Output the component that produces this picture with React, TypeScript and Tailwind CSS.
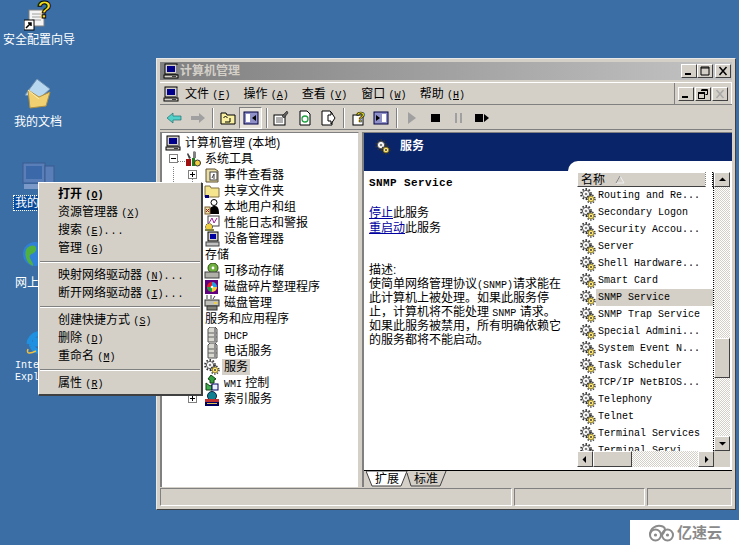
import React from "react";

const out = "border border-t-white border-l-white border-b-[#404040] border-r-[#404040] bg-[#d4d0c8]";
const hatch = "bg-[repeating-conic-gradient(#d4d0c8_0_25%,#ffffff_0_50%)] bg-[length:2px_2px]";
const cjk = "font-['Liberation_Sans','Noto_Sans_CJK_SC',sans-serif]";
const mono = "font-['Liberation_Mono','Noto_Sans_CJK_SC',monospace]";

const L = ({ children }: { children: React.ReactNode }) => <span className={`${mono} text-[10px] leading-none`}>{children}</span>;
const Key = ({ k }: { k: string }) => (
  <span className={`${mono} text-[10px] leading-none`}>(<span className="underline">{k}</span>)</span>
);

const Svg = ({ s = 16, children, className = "" }: { s?: number; children: React.ReactNode; className?: string }) => (
  <svg width={s} height={s} viewBox="0 0 16 16" className={`shrink-0 ${className}`}>{children}</svg>
);

const Computer = ({ s = 16 }: { s?: number }) => (
  <Svg s={s}>
    <rect x="2" y="1" width="12" height="10" fill="#d4d0c8" stroke="#000" />
    <rect x="4" y="3" width="8" height="6" fill="#00008a" />
    <rect x="13" y="2" width="2" height="9" fill="#808080" />
    <rect x="1" y="12" width="14" height="3" fill="#d4d0c8" stroke="#000" />
    <rect x="9" y="13" width="4" height="1" fill="#404040" />
  </Svg>
);

const Gear = ({ s = 16 }: { s?: number }) => (
  <Svg s={s}>
    <circle cx="6" cy="6" r="3.6" fill="#fff" stroke="#555" strokeWidth="1" />
    <circle cx="6" cy="6" r="5" fill="none" stroke="#333" strokeWidth="1.8" strokeDasharray="1.6 1.6" />
    <circle cx="6" cy="6" r="1.3" fill="#808080" />
    <circle cx="11" cy="11" r="2.8" fill="#ffe680" stroke="#807000" strokeWidth="0.8" />
    <circle cx="11" cy="11" r="4" fill="none" stroke="#333" strokeWidth="1.4" strokeDasharray="1.4 1.4" />
    <circle cx="11" cy="11" r="1" fill="#404040" />
  </Svg>
);

const Folder = () => (
  <Svg>
    <path d="M1 3h5l1 2h8v9H1z" fill="#f5e58c" stroke="#807040" />
    <rect x="1" y="12" width="4" height="3" fill="#000080" />
  </Svg>
);

const TreeIcon = ({ t }: { t: string }) => {
  if (t === "pc") return <Computer />;
  if (t === "tools")
    return (
      <Svg>
        <path d="M9 0l2 1v6H8V1z" fill="#808080" />
        <path d="M3 2l3 5-2 1-2-5z" fill="#404040" />
        <rect x="1" y="8" width="5" height="7" fill="#a01010" />
        <rect x="7" y="7" width="3" height="8" fill="#208020" />
        <circle cx="12.5" cy="12" r="3" fill="#f0d040" stroke="#333" />
      </Svg>
    );
  if (t === "event")
    return (
      <Svg>
        <path d="M2 2h9l3 2v11H2z" fill="#e8dfa8" stroke="#605030" />
        <rect x="6" y="5" width="7" height="8" fill="#fff" stroke="#404040" />
        <path d="M8 11l2-4v5" stroke="#404040" fill="none" />
      </Svg>
    );
  if (t === "share") return <Folder />;
  if (t === "users")
    return (
      <Svg>
        <circle cx="10" cy="3.5" r="3" fill="#fff" stroke="#000" />
        <path d="M5 15c0-6 2-8 6-8 3 0 4 3 4 8z" fill="#000" />
        <rect x="1" y="8" width="5" height="7" fill="#e8dfa8" stroke="#806030" />
        <path d="M2 10l3 3M5 10l-3 3" stroke="#a02020" />
      </Svg>
    );
  if (t === "perf")
    return (
      <Svg>
        <rect x="4" y="1" width="11" height="10" fill="#fff" stroke="#404040" />
        <path d="M5 8l3-5 2 5 3-5" stroke="#a020a0" fill="none" />
        <circle cx="5" cy="12" r="3.5" fill="#f0d040" stroke="#444" strokeDasharray="1.5 1" />
        <rect x="1" y="14" width="9" height="2" fill="#808040" />
      </Svg>
    );
  if (t === "dev")
    return (
      <Svg>
        <rect x="4" y="1" width="10" height="9" fill="#d4d0c8" stroke="#000" />
        <rect x="6" y="3" width="6" height="5" fill="#0000a0" />
        <rect x="2" y="11" width="13" height="4" fill="#c0c0c0" stroke="#404040" />
      </Svg>
    );
  if (t === "remov")
    return (
      <Svg>
        <circle cx="9" cy="5" r="5" fill="#70b040" stroke="#305010" />
        <circle cx="9" cy="5" r="1.4" fill="#fff" />
        <rect x="1" y="9" width="14" height="6" fill="#b0b0a8" stroke="#404040" />
      </Svg>
    );
  if (t === "defrag")
    return (
      <Svg>
        <rect x="1" y="1" width="13" height="14" fill="#600080" />
        <circle cx="8" cy="8" r="5" fill="#e02020" />
        <path d="M8 8V3a5 5 0 0 1 5 5z" fill="#20a0e0" />
        <path d="M8 8h5a5 5 0 0 1-5 5z" fill="#f0d040" />
        <path d="M8 8v5a5 5 0 0 1-5-5z" fill="#20a040" />
        <circle cx="8" cy="8" r="1.3" fill="#fff" />
      </Svg>
    );
  if (t === "disk")
    return (
      <Svg>
        <path d="M3 0v4M7 0v4M11 1l-2 3" stroke="#404040" />
        <rect x="1" y="5" width="14" height="6" fill="#c0c0b8" stroke="#333" />
        <rect x="3" y="11" width="10" height="4" fill="#808078" stroke="#333" />
        <rect x="10" y="7" width="3" height="2" fill="#f0d040" />
      </Svg>
    );
  if (t === "server")
    return (
      <Svg>
        <path d="M4 2l2-2h5l2 2v13H4z" fill="#d8d8d0" stroke="#505050" />
        <path d="M4 6h9M4 10h9" stroke="#606060" />
        <rect x="10" y="1" width="2" height="14" fill="#909090" />
      </Svg>
    );
  if (t === "gear") return <Gear />;
  if (t === "wmi")
    return (
      <Svg>
        <path d="M7 0l5 4-2 1v3h-4V5L4 4z" fill="#30a040" stroke="#104010" />
        <path d="M2 8l4 3 2-1v5H2z" fill="#40b050" stroke="#104010" />
        <rect x="8" y="9" width="6" height="6" fill="#e8f0ff" stroke="#000060" />
      </Svg>
    );
  return (
    <Svg>
      <circle cx="8" cy="5" r="4.5" fill="#108090" stroke="#102040" />
      <rect x="1" y="8" width="14" height="3" fill="#c03030" />
      <rect x="1" y="11" width="14" height="4" fill="#000060" />
      <rect x="3" y="12" width="10" height="1" fill="#e0c050" />
    </Svg>
  );
};

type Row = { lv: 0 | 1 | 2; i: string; t: React.ReactNode; box?: string; sel?: boolean };
const rows: Row[] = [
  { lv: 0, i: "pc", t: <>计算机管理 (本地)</> },
  { lv: 1, i: "tools", t: "系统工具", box: "-" },
  { lv: 2, i: "event", t: "事件查看器", box: "+" },
  { lv: 2, i: "share", t: "共享文件夹" },
  { lv: 2, i: "users", t: "本地用户和组" },
  { lv: 2, i: "perf", t: "性能日志和警报" },
  { lv: 2, i: "dev", t: "设备管理器" },
  { lv: 1, i: "tools", t: "存储" },
  { lv: 2, i: "remov", t: "可移动存储" },
  { lv: 2, i: "defrag", t: "磁盘碎片整理程序" },
  { lv: 2, i: "disk", t: "磁盘管理" },
  { lv: 1, i: "tools", t: "服务和应用程序" },
  { lv: 2, i: "server", t: <L>DHCP</L> },
  { lv: 2, i: "server", t: "电话服务" },
  { lv: 2, i: "gear", t: "服务", sel: true },
  { lv: 2, i: "wmi", t: <><L>WMI</L> 控制</> },
  { lv: 2, i: "index", t: "索引服务", box: "+" },
];

const TreeBox = ({ c }: { c: string }) => (
  <span className="w-[9px] h-[9px] shrink-0 border border-[#808080] bg-white flex items-center justify-center relative">
    <span className="w-[5px] h-px bg-black" />
    {c === "+" && <span className="absolute w-px h-[5px] bg-black" />}
  </span>
);

const TreeRow = ({ r }: { r: Row }) => {
  const pad = r.lv === 0 ? "pl-[3px]" : r.lv === 1 ? "pl-[23px]" : "pl-[42px]";
  return (
    <div className={`relative h-[16px] flex items-center ${pad}`}>
      {r.box && (
        <span className={`absolute top-[3px] ${r.lv === 1 ? "left-[7px]" : "left-[26px]"}`}>
          <TreeBox c={r.box} />
        </span>
      )}
      <TreeIcon t={r.i} />
      <span className={`ml-[2px] px-[2px] leading-[16px] whitespace-nowrap text-black ${r.sel ? "bg-[#d4d0c8]" : ""}`}>{r.t}</span>
    </div>
  );
};

const services = [
  "Routing and Re...",
  "Secondary Logon",
  "Security Accou...",
  "Server",
  "Shell Hardware...",
  "Smart Card",
  "SNMP Service",
  "SNMP Trap Service",
  "Special Admini...",
  "System Event N...",
  "Task Scheduler",
  "TCP/IP NetBIOS...",
  "Telephony",
  "Telnet",
  "Terminal Services",
  "Terminal Servi...",
];

const Arrow = ({ d }: { d: "u" | "d" | "l" | "r" }) => {
  const p = { u: "M4 6h7L7.5 2.5z", d: "M4 3h7L7.5 6.5z", l: "M8 1v7L4.5 4.5z", r: "M6 1v7l3.5-3.5z" }[d];
  return (
    <svg width="14" height="9" viewBox="0 0 14 9" className="block">
      <path d={p} fill="#000" />
    </svg>
  );
};

const SB = ({ d, className = "" }: { d: "u" | "d" | "l" | "r"; className?: string }) => (
  <div className={`${out} flex items-center justify-center ${className}`}><Arrow d={d} /></div>
);

const WinBtn = ({ kind, dim }: { kind: "min" | "max" | "restore" | "close"; dim?: boolean }) => (
  <div className={`${out} w-[16px] h-[14px] flex items-center justify-center`}>
    <svg width="12" height="10" viewBox="0 0 12 10">
      {kind === "min" && <rect x="2" y="7" width="6" height="2" fill="#000" />}
      {kind === "max" && <path d="M2 1h8v8H2z M2 2h8" stroke="#000" fill="none" />}
      {kind === "restore" && (
        <>
          <path d="M4.5 .5h6v5h-2" stroke="#000" fill="none" />
          <path d="M4 1.5h7" stroke="#000" />
          <rect x="1.5" y="3.5" width="6" height="6" fill="none" stroke="#000" />
          <path d="M1 4.5h7" stroke="#000" />
        </>
      )}
      {kind === "close" && (
        <path d="M2.5 1l7 8M9.5 1l-7 8" stroke={dim ? "#a8a8a8" : "#000"} strokeWidth="1.5" />
      )}
    </svg>
  </div>
);

const Sep = ({ className = "" }: { className?: string }) => (
  <span className={`w-[2px] h-[20px] shrink-0 border-l border-l-[#808080] border-r border-r-white ${className}`} />
);

const MenuItem = ({ label, k, dots, bold }: { label: string; k: string; dots?: boolean; bold?: boolean }) => (
  <div className={`h-[18px] pl-[19px] leading-[18px] whitespace-nowrap text-black ${bold ? "font-bold" : ""}`}>
    {label}&nbsp;<Key k={k} />{dots && <span className={`${mono} text-[10px] leading-none tracking-[1px]`}>...</span>}
  </div>
);
const MenuSep = () => (
  <div className="h-[9px] flex items-center mx-[1px]">
    <div className="w-full h-[2px] border-t border-t-[#808080] border-b border-b-white" />
  </div>
);

const MenuBarItem = ({ label, k, className = "" }: { label: string; k: string; className?: string }) => (
  <span className={`whitespace-nowrap ${className}`}>{label}&nbsp;<Key k={k} /></span>
);

export default function App() {
  return (
    <div className={`relative w-[739px] h-[545px] overflow-hidden bg-[#3a6ea5] text-[12px] ${cjk}`}>
      {/* desktop icons */}
      <div className="absolute left-0 top-0 w-[78px] flex flex-col items-center text-white">
        <svg width="30" height="31" viewBox="0 0 30 31">
          <rect x="5" y="10" width="15" height="16" fill="#f4f4f4" stroke="#808080" />
          <path d="M8 14h9M8 17h9M8 20h9" stroke="#a0a0a0" />
          <text x="13" y="18" fontSize="24" fontWeight="bold" fontFamily="Liberation Sans" fill="#f5e020" stroke="#000" strokeWidth="1">?</text>
          <rect x="0" y="20" width="10" height="10" fill="#fff" stroke="#000" />
          <path d="M2 28l5-5M4 23h3v3" stroke="#000" fill="none" strokeWidth="1.5" />
        </svg>
        <span className="mt-[1px] leading-[16px]">安全配置向导</span>
      </div>
      <div className="absolute left-[14px] top-[78px] w-[48px] flex flex-col items-center text-white">
        <svg width="32" height="32" viewBox="0 0 32 32">
          <path d="M3 17l12-16 13 10-10 9z" fill="#b8d8f0" stroke="#7090b0" />
          <path d="M6 12l2 18 16-2 4-14-11 5z" fill="#f0d070" stroke="#b09040" />
          <path d="M6 12l11 9" stroke="#fff0b0" />
        </svg>
        <span className="mt-[4px] leading-[16px]">我的文档</span>
      </div>
      <div className="absolute left-[14px] top-[160px] flex flex-col items-start text-white">
        <svg width="40" height="32" viewBox="0 0 40 32" className="ml-[8px]">
          <rect x="1" y="3" width="22" height="20" fill="#5a7fb8" stroke="#3a5a90" />
          <rect x="4" y="6" width="16" height="13" fill="#3a68a8" />
          <rect x="23" y="6" width="9" height="22" fill="#5a7fb8" stroke="#3a5a90" />
          <rect x="2" y="24" width="20" height="5" fill="#7a98c8" />
        </svg>
        <span className="mt-[4px] leading-[14px] px-[1px] bg-[#0a4a9a] outline-1 outline-dotted outline-white">我的电脑</span>
      </div>
      <div className="absolute left-[15px] top-[240px] flex flex-col items-start text-white">
        <svg width="32" height="32" viewBox="0 0 32 32" className="ml-[7px]">
          <circle cx="13" cy="14" r="12" fill="#3080d8" />
          <path d="M5 8c5-4 10-3 9 2s-8 3-6 8 3 4 3 8C5 24 1 14 5 8z" fill="#50b040" />
          <path d="M18 5c5 1 8 7 6 12-4-1-6-2-5-6z" fill="#60c050" />
        </svg>
        <span className="mt-[3px] leading-[16px]">网上邻居</span>
      </div>
      <div className="absolute left-[15px] top-[325px] flex flex-col items-start text-white">
        <svg width="32" height="32" viewBox="0 0 32 32" className="ml-[9px]">
          <path d="M5 19a11 11 0 0 1 21-4H9m-4 4h22" fill="none" stroke="#2090e0" strokeWidth="5" />
          <path d="M8 21a10 10 0 0 0 17 2" fill="none" stroke="#2090e0" strokeWidth="5" />
          <path d="M26 6c4-4 6 0 0 8M4 24c-2 5 2 5 8 2" fill="none" stroke="#f0c040" strokeWidth="1.5" />
        </svg>
        <span className={`${mono} text-[10px] mt-[3px] leading-[12px]`}>Internet<br />Explorer</span>
      </div>

      {/* window */}
      <div className="absolute left-[156px] top-[58px] w-[580px] h-[452px] bg-[#d4d0c8] border border-t-[#e8e8e8] border-l-[#e8e8e8] border-b-[#404040] border-r-[#404040] p-[3px] flex flex-col text-black">
        {/* title */}
        <div className="h-[18px] shrink-0 flex items-center pl-[3px] pr-[1px] bg-gradient-to-r from-[#808080] to-[#c4c4c4]">
          <Computer />
          <span className="ml-[1px] font-bold text-[#d4d0c8]">计算机管理</span>
          <div className="ml-auto flex">
            <WinBtn kind="min" />
            <WinBtn kind="max" />
            <div className="ml-[2px]"><WinBtn kind="close" /></div>
          </div>
        </div>
        {/* menu */}
        <div className="mt-[2px] h-[23px] shrink-0 flex items-center border-t border-t-white border-b border-b-[#808080]">
          <div className="flex items-center flex-1 pl-[3px]">
            <Computer />
            <MenuBarItem label="文件" k="F" className="ml-[6px]" />
            <MenuBarItem label="操作" k="A" className="ml-[13px]" />
            <MenuBarItem label="查看" k="V" className="ml-[13px]" />
            <MenuBarItem label="窗口" k="W" className="ml-[14px]" />
            <MenuBarItem label="帮助" k="H" className="ml-[13px]" />
          </div>
          <div className="h-full border-l border-l-[#808080] flex items-center gap-[1px] pl-[3px] pr-[3px] border-r border-r-white">
            <WinBtn kind="min" />
            <WinBtn kind="restore" />
            <WinBtn kind="close" dim />
          </div>
        </div>
        {/* toolbar */}
        <div className="mt-[1px] h-[24px] shrink-0 flex items-center border-b border-b-[#808080]">
          <Svg className="ml-[6px]"><path d="M1 8l6-5v3h8v4H7v3z" fill="#50d0c8" stroke="#207070" strokeWidth="0.7" /></Svg>
          <Svg className="ml-[8px]"><path d="M15 8L9 3v3H1v4h8v3z" fill="#a0a0a0" /></Svg>
          <Sep className="ml-[6px]" />
          <Svg className="ml-[6px]">
            <path d="M1 3h5l1 2h8v9H1z" fill="#f8f0a0" stroke="#000" />
            <path d="M10 7v4H5M3.5 7l2-2 2 2" transform="translate(0 1)" stroke="#000" fill="none" />
          </Svg>
          <div className="ml-[3px] w-[23px] h-[22px] flex items-center justify-center border border-t-[#808080] border-l-[#808080] border-b-white border-r-white bg-[#e8e4dc]">
            <Svg>
              <rect x="1" y="2" width="14" height="12" fill="#9090c8" stroke="#000040" />
              <rect x="3" y="4" width="4" height="8" fill="#fff" />
              <path d="M13 5v6L9 8z" fill="#000" />
            </Svg>
          </div>
          <Sep className="ml-[4px]" />
          <Svg className="ml-[5px]">
            <rect x="1" y="5" width="11" height="10" fill="#fff" stroke="#000" />
            <path d="M3 8h7M3 10h7M3 12h7" stroke="#606060" />
            <path d="M9 6l5-5 1 2-4 5z" fill="#606060" stroke="#000" strokeWidth="0.5" />
          </Svg>
          <Svg className="ml-[8px]">
            <path d="M3 1h7l3 3v11H3z" fill="#fff" stroke="#000" />
            <circle cx="8" cy="9" r="3" fill="none" stroke="#20a040" strokeWidth="1.3" />
          </Svg>
          <Svg className="ml-[7px]">
            <path d="M2 1h8l2 2v12H2z" fill="#fff" stroke="#000" />
            <path d="M8 5h3V2l4 6-4 6v-3H8z" fill="#fff" stroke="#000" />
          </Svg>
          <Sep className="ml-[7px]" />
          <Svg className="ml-[7px]">
            <rect x="1" y="5" width="10" height="10" fill="#fff" stroke="#000" />
            <text x="4" y="12" fontSize="15" fontWeight="bold" fontFamily="Liberation Sans" fill="#f0e020" stroke="#000" strokeWidth="0.6">?</text>
          </Svg>
          <Svg className="ml-[5px]">
            <rect x="1" y="2" width="14" height="12" fill="#9090c8" stroke="#000040" />
            <rect x="9" y="4" width="4" height="8" fill="#fff" />
            <path d="M3 5v6l4-3z" fill="#000" />
          </Svg>
          <Sep className="ml-[7px]" />
          <Svg className="ml-[7px]"><path d="M3 2l8 6-8 6z" fill="#a0a0a0" /></Svg>
          <Svg className="ml-[7px]"><rect x="3" y="4" width="9" height="8" fill="#000" /></Svg>
          <Svg className="ml-[7px]"><path d="M4 3h2v10H4zM9 3h2v10H9z" fill="#a0a0a0" /></Svg>
          <Svg className="ml-[7px]" s={16}><rect x="1" y="4" width="8" height="8" fill="#000" /><path d="M10 4l5 4-5 4z" fill="#000" /></Svg>
        </div>
        {/* client */}
        <div className="mt-[2px] h-[355px] shrink-0 flex">
          {/* tree */}
          <div className="relative w-[199px] shrink-0 bg-white border-t border-l-2 border-t-[#808080] border-l-[#808080] border-r border-r-[#d4d0c8] pt-[2px] overflow-hidden">
            <svg className="absolute left-0 top-0" width="60" height="300">
              <path d="M11.5 23v1M11.5 34v200M16 28.5h7M30.5 38v228M30 44.5h6M30 60.5h6M30 76.5h6M30 92.5h6M30 108.5h6" stroke="#808080" strokeDasharray="1 1" fill="none" />
            </svg>
            {rows.map((r, i) => <TreeRow key={i} r={r} />)}
          </div>
          <div className="w-[3px] shrink-0" />
          {/* right pane */}
          <div className="flex-1 flex flex-col border-l-2 border-l-[#808080] border-t border-t-[#808080] min-w-0">
            <div className="h-[28px] shrink-0 bg-[#0a246a] flex items-center pl-[11px]">
              <Gear />
              <span className="ml-[9px] -mt-[3px] font-bold text-white">服务</span>
            </div>
            <div className="h-[309px] shrink-0 flex bg-[#0a246a]">
              <div className="w-[204px] shrink-0 flex flex-col">
                <div className="h-[10px] shrink-0" />
                <div className="flex-1 bg-white pl-[5px] pt-[5px] text-black">
                  <div className={`${mono} font-bold text-[11px] leading-[14px] tracking-[0.4px]`}>SNMP Service</div>
                  <div className="mt-[16px] leading-[15px]">
                    <a className="text-[#0000a0] underline">停止</a>此服务<br />
                    <a className="text-[#0000a0] underline">重启动</a>此服务
                  </div>
                  <div className="mt-[27px] leading-[14px] whitespace-nowrap">
                    描述:<br />
                    使简单网络管理协议<L>(SNMP)</L>请求能在<br />
                    此计算机上被处理。如果此服务停<br />
                    止，计算机将不能处理 <L>SNMP</L> 请求。<br />
                    如果此服务被禁用，所有明确依赖它<br />
                    的服务都将不能启动。
                  </div>
                </div>
              </div>
              <div className="w-[164px] shrink-0 bg-white rounded-tl-[10px] pl-[9px] pt-[11px] pr-[2px] flex flex-col">
                <div className="flex h-[279px] shrink-0">
                  <div className="w-[137px] shrink-0 flex flex-col">
                    <div className={`${out} h-[15px] shrink-0 flex items-center pl-[3px] text-black relative`}>
                      名称
                      <svg width="10" height="9" viewBox="0 0 10 9" className="ml-[10px]"><path d="M5 1l4 7H1z" fill="none" stroke="#f0f0f0" /><path d="M1 8l4-7" stroke="#808080" /></svg>
                      <div className="absolute right-0 top-[-1px] w-[8px] h-[15px] bg-white border-l border-l-[#808080] border-r border-dotted border-r-black" />
                    </div>
                    <div className="h-[264px] overflow-hidden border-r border-dotted border-r-black">
                      {services.map((s, i) => (
                        <div key={i} className={`h-[17px] flex items-center pl-[3px] ${mono} text-[10px] whitespace-pre`}>
                          <Gear />
                          <span className={`pl-[2px] flex-1 leading-[17px] ${s === "SNMP Service" ? "bg-[#d4d0c8]" : ""}`}>{s}</span>
                        </div>
                      ))}
                    </div>
                  </div>
                  <div className="w-[16px] shrink-0 flex flex-col">
                    <SB d="u" className="h-[15px]" />
                    <div className={`h-[151px] ${hatch}`} />
                    <div className={`${out} h-[40px]`} />
                    <div className={`h-[58px] ${hatch}`} />
                    <SB d="d" className="h-[15px]" />
                  </div>
                </div>
                <div className="flex h-[16px] shrink-0">
                  <SB d="l" className="w-[16px]" />
                  <div className={`${out} w-[39px]`} />
                  <div className={`flex-1 ${hatch}`} />
                  <SB d="r" className="w-[16px]" />
                  <div className="w-[16px] bg-[#d4d0c8]" />
                </div>
                <div className="flex-1 bg-white" />
              </div>
            </div>
            {/* tabs */}
            <div className="h-[17px] shrink-0 border-t border-t-black flex bg-[#d4d0c8] pl-[2px] items-start">
              <div className="relative w-[42px] h-[16px] flex items-center justify-center">
                <svg className="absolute inset-0" width="42" height="16" viewBox="0 0 42 16">
                  <path d="M0 0L6 15H35L41 0z" fill="#fff" stroke="#404040" />
                </svg>
                <span className="relative">扩展</span>
              </div>
              <div className="relative -ml-[3px] w-[42px] h-[16px] flex items-center justify-center">
                <svg className="absolute inset-0" width="42" height="16" viewBox="0 0 42 16">
                  <path d="M2 2L6 15H35L41 0" fill="none" stroke="#404040" />
                </svg>
                <span className="relative">标准</span>
              </div>
            </div>
          </div>
        </div>
        {/* status */}
        <div className="mt-[1px] h-[18px] shrink-0 flex gap-[2px]">
          <div className="w-[352px] border border-t-[#808080] border-l-[#808080] border-b-white border-r-white" />
          <div className="w-[131px] border border-t-[#808080] border-l-[#808080] border-b-white border-r-white" />
          <div className="flex-1 border border-t-[#808080] border-l-[#808080] border-b-white border-r-white" />
        </div>
      </div>

      {/* context menu */}
      <div className={`absolute left-[38px] top-[182px] w-[164px] h-[213px] ${out} shadow-[1px_1px_0_#404040] pt-[2px]`}>
        <MenuItem label="打开" k="O" bold />
        <MenuItem label="资源管理器" k="X" />
        <MenuItem label="搜索" k="E" dots />
        <MenuItem label="管理" k="G" />
        <MenuSep />
        <MenuItem label="映射网络驱动器" k="N" dots />
        <MenuItem label="断开网络驱动器" k="I" dots />
        <MenuSep />
        <MenuItem label="创建快捷方式" k="S" />
        <MenuItem label="删除" k="D" />
        <MenuItem label="重命名" k="M" />
        <MenuSep />
        <MenuItem label="属性" k="R" />
      </div>

      {/* watermark */}
      <div className="absolute left-[630px] top-[520px] w-[109px] h-[25px] bg-white flex items-center pl-[18px] text-[#8a8a8a]">
        <svg width="27" height="20" viewBox="0 0 27 20">
          <circle cx="7.5" cy="12" r="5.5" fill="none" stroke="#8a8a8a" strokeWidth="2" />
          <circle cx="19.5" cy="12" r="5.5" fill="none" stroke="#8a8a8a" strokeWidth="2" />
          <path d="M2 12C2 5 8 2 13 3s5 4 1 9" fill="none" stroke="#8a8a8a" strokeWidth="2" />
          <circle cx="7.5" cy="12" r="1.6" fill="#8a8a8a" />
          <circle cx="19.5" cy="12" r="1.6" fill="#8a8a8a" />
        </svg>
        <span className="ml-[2px] text-[15px] font-bold leading-none">亿速云</span>
      </div>
    </div>
  );
}
